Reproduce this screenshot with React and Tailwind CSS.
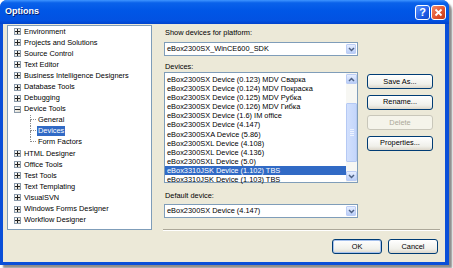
import React from "react";

const treeItems = [
  { label: "Environment", kind: "closed" },
  { label: "Projects and Solutions", kind: "closed" },
  { label: "Source Control", kind: "closed" },
  { label: "Text Editor", kind: "closed" },
  { label: "Business Intelligence Designers", kind: "closed" },
  { label: "Database Tools", kind: "closed" },
  { label: "Debugging", kind: "closed" },
  { label: "Device Tools", kind: "open" },
  { label: "General", kind: "child" },
  { label: "Devices", kind: "child", selected: true },
  { label: "Form Factors", kind: "child", last: true },
  { label: "HTML Designer", kind: "closed" },
  { label: "Office Tools", kind: "closed" },
  { label: "Test Tools", kind: "closed" },
  { label: "Text Templating", kind: "closed" },
  { label: "VisualSVN", kind: "closed" },
  { label: "Windows Forms Designer", kind: "closed" },
  { label: "Workflow Designer", kind: "closed" },
];

const devices = [
  "eBox2300SX Device (0.123) MDV Сварка",
  "eBox2300SX Device (0.124) MDV Покраска",
  "eBox2300SX Device (0.125) MDV Рубка",
  "eBox2300SX Device (0.126) MDV Гибка",
  "eBox2300SX Device (1.6) IM office",
  "eBox2300SX Device (4.147)",
  "eBox2300SXA Device (5.86)",
  "eBox2300SXL Device (4.108)",
  "eBox2300SXL Device (4.136)",
  "eBox2300SXL Device (5.0)",
  "eBox3310JSK Device (1.102) TBS",
  "eBox3310JSK Device (1.103) TBS",
];

const Expander = ({ open }) => (
  <span className="ml-[6px] mr-[3px] flex h-[7px] w-[7px] items-center justify-center border border-[#8a9aaa] bg-[linear-gradient(135deg,#ffffff,#dcd8cc)]">
    <svg width="5" height="5" viewBox="0 0 5 5">
      <rect x="0" y="2" width="5" height="1" fill="#222" />
      {!open && <rect x="2" y="0" width="1" height="5" fill="#222" />}
    </svg>
  </span>
);

const TreeRow = ({ item }) => {
  if (item.kind === "child") {
    return (
      <div className="flex h-[11.1px] items-center">
        <span className="ml-[22px] flex w-[6px] flex-col self-stretch">
          <span className="h-1/2 border-b border-l border-dotted border-[#8c8c8c]" />
          {!item.last && <span className="h-1/2 border-l border-dotted border-[#8c8c8c]" />}
        </span>
        <span
          className={
            item.selected
              ? "ml-[1px] bg-[#316ac5] px-[1px] leading-[10px] text-white"
              : "ml-[1px] px-[1px] leading-[10px]"
          }
        >
          {item.label}
        </span>
      </div>
    );
  }
  return (
    <div className="flex h-[11.1px] items-center">
      <Expander open={item.kind === "open"} />
      <span className="leading-[10px]">{item.label}</span>
    </div>
  );
};

const Chevron = () => (
  <svg width="7" height="5" viewBox="0 0 7 5">
    <path d="M1 1 L3.5 3.5 L6 1" stroke="#4d6185" strokeWidth="1.5" fill="none" />
  </svg>
);

const Combo = ({ value }) => (
  <div className="ml-[1px] flex h-[14px] w-[194px] items-center border border-[#7f9db9] bg-white">
    <span className="flex-1 pl-[2px] leading-[10px]">{value}</span>
    <span className="mr-[1px] flex h-[10px] w-[10px] items-center justify-center rounded-[1px] border border-[#bccdf5] bg-[linear-gradient(180deg,#e6eeff,#b9cdf7)]">
      <Chevron />
    </span>
  </div>
);

const XpButton = ({ children, disabled, primary, className = "" }) => (
  <div
    className={
      "flex h-[15px] items-center justify-center rounded-[3px] border " +
      (disabled
        ? "border-[#c9c7ba] bg-[#f5f4ea] text-[#aca899] "
        : primary
        ? "border-[#003c74] bg-[linear-gradient(180deg,#ffffff,#f0f0ea_70%,#dcd7cb)] shadow-[inset_0_0_0_1px_#a7c2ee] "
        : "border-[#003c74] bg-[linear-gradient(180deg,#ffffff,#f0f0ea_70%,#dcd7cb)] ") +
      className
    }
  >
    {children}
  </div>
);

const Scrollbar = () => (
  <div className="flex w-[11px] flex-col bg-[#f7f7f3] py-[1px]">
    <div className="flex h-[10px] items-center justify-center rounded-[1px] border border-[#bccdf5] bg-[linear-gradient(180deg,#e6eeff,#b9cdf7)]">
      <svg width="7" height="5" viewBox="0 0 7 5">
        <path d="M1 4 L3.5 1.5 L6 4" stroke="#4d6185" strokeWidth="1.5" fill="none" />
      </svg>
    </div>
    <div className="h-[19px]" />
    <div className="flex h-[59px] items-center justify-center rounded-[1px] border border-[#b5c9f4] bg-[linear-gradient(90deg,#d2e0fd,#c4d6fb)]">
      <div className="flex flex-col gap-[1px]">
        <span className="h-px w-[4px] bg-[#eef3ff]" />
        <span className="h-px w-[4px] bg-[#eef3ff]" />
        <span className="h-px w-[4px] bg-[#eef3ff]" />
        <span className="h-px w-[4px] bg-[#eef3ff]" />
      </div>
    </div>
    <div className="flex-1" />
    <div className="flex h-[10px] items-center justify-center rounded-[1px] border border-[#bccdf5] bg-[linear-gradient(180deg,#e6eeff,#b9cdf7)]">
      <Chevron />
    </div>
  </div>
);

export default function App() {
  return (
    <div className="h-[268px] w-[453px] overflow-hidden bg-white font-['Liberation_Sans',Arial,sans-serif] text-[7.4px] text-black">
      <div className="flex h-[265px] w-[449px] flex-col rounded-t-[7px] bg-[#0a4fd8] shadow-[3px_3px_2px_rgba(0,0,0,0.45)]">
        {/* Title bar */}
        <div className="flex h-[24px] items-center rounded-t-[7px] bg-[linear-gradient(180deg,#3f95ff_0%,#0a62ea_12%,#0056e6_45%,#0252e2_85%,#0143cc_100%)] pl-[5px] pr-[3px]">
          <span className="flex-1 text-[9px] font-bold text-white [text-shadow:1px_1px_0_#0a1f6e]">
            Options
          </span>
          <div className="flex gap-[1px]">
            <div className="flex h-[15px] w-[15px] items-center justify-center rounded-[3px] border border-white bg-[linear-gradient(135deg,#5b93ff,#1f5ee8_60%,#1348c6)] text-[11px] font-bold leading-none text-white">
              ?
            </div>
            <div className="flex h-[15px] w-[15px] items-center justify-center rounded-[3px] border border-white bg-[linear-gradient(135deg,#f08a6a,#e0502a_60%,#c23a18)]">
              <svg width="9" height="9" viewBox="0 0 9 9">
                <path d="M1.5 1.5 L7.5 7.5 M7.5 1.5 L1.5 7.5" stroke="white" strokeWidth="1.8" />
              </svg>
            </div>
          </div>
        </div>

        {/* Body */}
        <div className="mb-[3px] ml-[3px] mr-[4px] flex flex-1 bg-[#ece9d8] pl-[4px] pt-[1px]">
          <div className="h-[205px] w-[145px] border border-[#7f9db9] bg-white">
            {treeItems.map((item) => (
              <TreeRow key={item.label} item={item} />
            ))}
          </div>

          <div className="ml-[11px] flex w-[277px] flex-col">
            <div className="mt-[3px] pl-[2px] leading-[10px]">Show devices for platform:</div>
            <div className="mt-[4px]">
              <Combo value="eBox2300SX_WinCE600_SDK" />
            </div>
            <div className="mt-[6px] pl-[2px] leading-[10px]">Devices:</div>
            <div className="flex">
              <div className="ml-[1px] flex h-[111px] w-[194px] border border-[#7f9db9] bg-white">
                <div className="flex-1 pt-[2px]">
                  {devices.map((d, i) => (
                    <div
                      key={d}
                      className={
                        i === 10
                          ? "flex h-[9.1px] items-center bg-[#316ac5] pl-[2px] text-white"
                          : "flex h-[9.1px] items-center pl-[2px]"
                      }
                    >
                      {d}
                    </div>
                  ))}
                </div>
                <Scrollbar />
              </div>
              <div className="ml-[9px] mt-[2px] flex w-[66px] flex-col gap-[5.5px]">
                <XpButton>Save As...</XpButton>
                <XpButton>Rename...</XpButton>
                <XpButton disabled>Delete</XpButton>
                <XpButton>Properties...</XpButton>
              </div>
            </div>
            <div className="mt-[8px] pl-[2px] leading-[10px]">Default device:</div>
            <div className="mt-[3px]">
              <Combo value="eBox2300SX Device (4.147)" />
            </div>
            <div className="mt-[11px] h-[2px] border-b border-t border-b-white border-t-[#aca899]" />
            <div className="mt-[8px] flex justify-end gap-[6px] pr-[2px]">
              <XpButton primary className="w-[50px]">OK</XpButton>
              <XpButton className="w-[50px]">Cancel</XpButton>
            </div>
          </div>
        </div>
      </div>
    </div>
  );
}
